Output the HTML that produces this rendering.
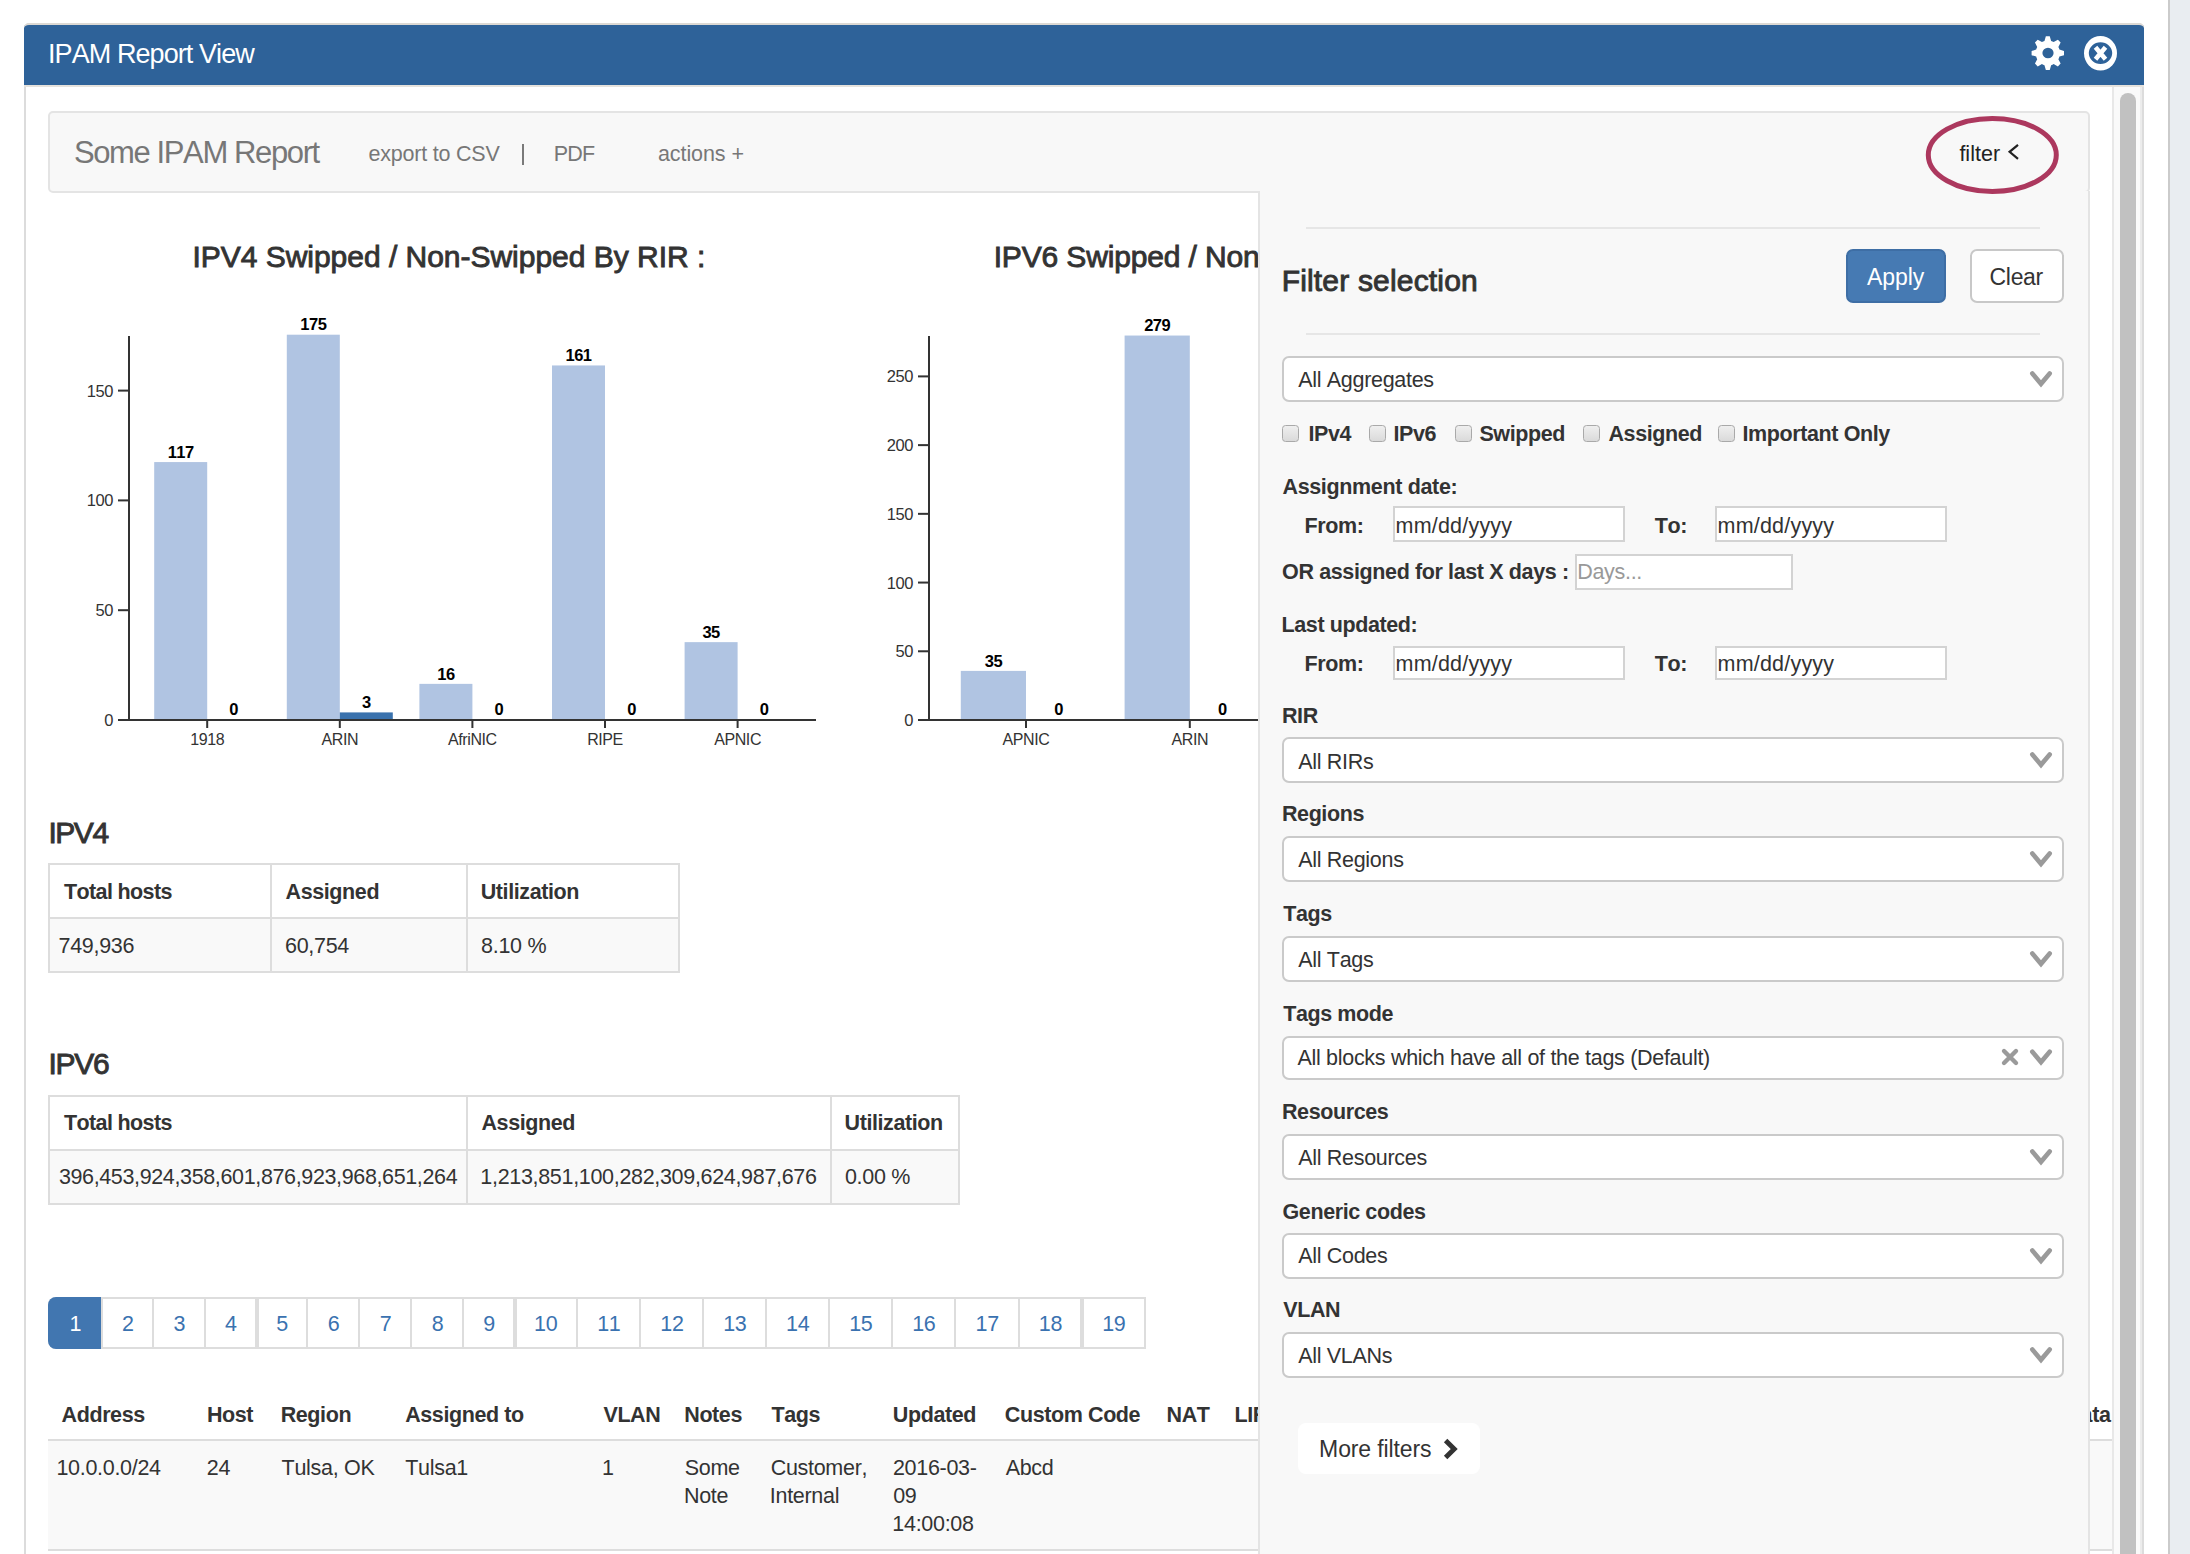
<!DOCTYPE html>
<html><head><meta charset="utf-8"><title>IPAM Report View</title>
<style>
html,body{margin:0;padding:0;width:2190px;height:1554px;overflow:hidden;background:#fff;position:relative}
body{font-family:"Liberation Sans",sans-serif;}
.t{position:absolute;white-space:nowrap;font-family:"Liberation Sans",sans-serif;font-kerning:none}
div{box-sizing:border-box}
svg text{font-family:"Liberation Sans",sans-serif;font-kerning:none}
</style></head><body>
<div style="position:absolute;left:2168px;top:0px;width:2px;height:1554px;background:#cbcbcb"></div>
<div style="position:absolute;left:2170px;top:0px;width:20px;height:1554px;background:#e9edf1"></div>
<div style="position:absolute;left:24px;top:23px;width:2120px;height:1577px;background:#fff;border:2px solid #dcdcdc;border-radius:5px 5px 0 0"></div>
<div style="position:absolute;left:24px;top:23px;width:2120px;height:64px;background:#2e6299;border-radius:5px 5px 0 0;border-top:2px solid #dcd9d4"></div>
<div style="position:absolute;left:24px;top:85px;width:2120px;height:2px;background:#e5e2dd"></div>
<div class="t" style="left:48.01px;top:39px;font-size:27px;line-height:30px;font-weight:normal;color:#fff;letter-spacing:-0.923px;">IPAM Report View</div>
<svg style="position:absolute;left:0;top:0" width="2190" height="100"><path fill="#fff" fill-rule="evenodd" d="M2044.46,40.99 L2045.85,36.22 L2049.75,36.22 L2051.14,40.99 L2052.43,41.46 L2053.66,42.08 L2057.88,39.73 L2060.64,42.60 L2058.38,47.00 L2058.98,48.28 L2059.42,49.62 L2064.00,51.06 L2064.00,55.14 L2059.42,56.58 L2058.98,57.92 L2058.38,59.20 L2060.64,63.60 L2057.88,66.47 L2053.66,64.12 L2052.43,64.74 L2051.14,65.21 L2049.75,69.98 L2045.85,69.98 L2044.46,65.21 L2043.17,64.74 L2041.94,64.12 L2037.72,66.47 L2034.96,63.60 L2037.22,59.20 L2036.62,57.92 L2036.18,56.58 L2031.60,55.14 L2031.60,51.06 L2036.18,49.62 L2036.62,48.28 L2037.22,47.00 L2034.96,42.60 L2037.72,39.73 L2041.94,42.08 L2043.17,41.46 Z M2053.6,53 A5.6,5.3 0 1 0 2042.4,53 A5.6,5.3 0 1 0 2053.6,53 Z"/><path fill="#fff" fill-rule="evenodd" d="M2117,53.2 A16.5,17.3 0 1 0 2084,53.2 A16.5,17.3 0 1 0 2117,53.2 Z M2112.2,53.1 A11.7,10.9 0 1 0 2088.8,53.1 A11.7,10.9 0 1 0 2112.2,53.1 Z"/><path d="M2095.5,47.3 L2105.5,59.3 M2105.5,47.3 L2095.5,59.3" stroke="#fff" stroke-width="4.6" stroke-linecap="butt"/></svg>
<div style="position:absolute;left:48px;top:111px;width:2042px;height:82px;background:#f8f8f8;border:2px solid #e4e4e4;border-radius:5px"></div>
<div class="t" style="left:73.89px;top:135px;font-size:31px;line-height:35px;font-weight:normal;color:#777;letter-spacing:-1.380px;">Some IPAM Report</div>
<div class="t" style="left:368.59px;top:142px;font-size:21.5px;line-height:24px;font-weight:normal;color:#777;letter-spacing:-0.219px;">export to CSV</div>
<div style="position:absolute;left:522px;top:144px;width:2px;height:21px;background:#7a7a7a"></div>
<div class="t" style="left:553.64px;top:142px;font-size:21.5px;line-height:24px;font-weight:normal;color:#777;letter-spacing:-0.788px;">PDF</div>
<div class="t" style="left:657.99px;top:142px;font-size:21.5px;line-height:24px;font-weight:normal;color:#777;letter-spacing:-0.085px;">actions +</div>
<div class="t" style="left:1959.40px;top:142px;font-size:21.5px;line-height:24px;font-weight:normal;color:#222;letter-spacing:0.009px;">filter</div>
<svg style="position:absolute;left:0;top:0" width="2190" height="210"><path d="M2018,144.8 L2009.6,151.8 L2018,158.8" fill="none" stroke="#222" stroke-width="2.2"/></svg>
<div class="t" style="left:192.38px;top:240px;font-size:30px;line-height:33px;font-weight:normal;color:#333;letter-spacing:-0.020px;-webkit-text-stroke:0.9px #333;">IPV4 Swipped / Non-Swipped By RIR :</div>
<div class="t" style="left:993.68px;top:240px;font-size:30px;line-height:33px;font-weight:normal;color:#333;letter-spacing:-0.150px;-webkit-text-stroke:0.9px #333;">IPV6 Swipped / Non-Swipped By RIR :</div>
<svg style="position:absolute;left:0;top:0" width="2190" height="780"><rect x="154.20" y="462.07" width="53" height="256.93" fill="#b0c4e2"/><text x="180.70" y="457.77" font-size="16.5" font-weight="bold" letter-spacing="-0.5" text-anchor="middle" fill="#000">117</text><text x="233.70" y="714.70" font-size="16.5" font-weight="bold" letter-spacing="-0.5" text-anchor="middle" fill="#000">0</text><rect x="286.80" y="334.70" width="53" height="384.30" fill="#b0c4e2"/><text x="313.30" y="330.40" font-size="16.5" font-weight="bold" letter-spacing="-0.5" text-anchor="middle" fill="#000">175</text><rect x="339.80" y="712.41" width="53" height="6.59" fill="#3a72ad"/><text x="366.30" y="708.11" font-size="16.5" font-weight="bold" letter-spacing="-0.5" text-anchor="middle" fill="#000">3</text><rect x="419.40" y="683.86" width="53" height="35.14" fill="#b0c4e2"/><text x="445.90" y="679.56" font-size="16.5" font-weight="bold" letter-spacing="-0.5" text-anchor="middle" fill="#000">16</text><text x="498.90" y="714.70" font-size="16.5" font-weight="bold" letter-spacing="-0.5" text-anchor="middle" fill="#000">0</text><rect x="552.00" y="365.44" width="53" height="353.56" fill="#b0c4e2"/><text x="578.50" y="361.14" font-size="16.5" font-weight="bold" letter-spacing="-0.5" text-anchor="middle" fill="#000">161</text><text x="631.50" y="714.70" font-size="16.5" font-weight="bold" letter-spacing="-0.5" text-anchor="middle" fill="#000">0</text><rect x="684.60" y="642.14" width="53" height="76.86" fill="#b0c4e2"/><text x="711.10" y="637.84" font-size="16.5" font-weight="bold" letter-spacing="-0.5" text-anchor="middle" fill="#000">35</text><text x="764.10" y="714.70" font-size="16.5" font-weight="bold" letter-spacing="-0.5" text-anchor="middle" fill="#000">0</text><rect x="128" y="336" width="2" height="385" fill="#333"/><rect x="118" y="719" width="698" height="2" fill="#333"/><rect x="118" y="719.00" width="11" height="2" fill="#333"/><text x="113" y="726.00" font-size="16.5" letter-spacing="-0.4" text-anchor="end" fill="#333">0</text><rect x="118" y="609.20" width="11" height="2" fill="#333"/><text x="113" y="616.20" font-size="16.5" letter-spacing="-0.4" text-anchor="end" fill="#333">50</text><rect x="118" y="499.40" width="11" height="2" fill="#333"/><text x="113" y="506.40" font-size="16.5" letter-spacing="-0.4" text-anchor="end" fill="#333">100</text><rect x="118" y="389.60" width="11" height="2" fill="#333"/><text x="113" y="396.60" font-size="16.5" letter-spacing="-0.4" text-anchor="end" fill="#333">150</text><rect x="206.20" y="719" width="2" height="9" fill="#333"/><text x="207.20" y="745" font-size="16" letter-spacing="-0.4" text-anchor="middle" fill="#333">1918</text><rect x="338.80" y="719" width="2" height="9" fill="#333"/><text x="339.80" y="745" font-size="16" letter-spacing="-0.4" text-anchor="middle" fill="#333">ARIN</text><rect x="471.40" y="719" width="2" height="9" fill="#333"/><text x="472.40" y="745" font-size="16" letter-spacing="-0.4" text-anchor="middle" fill="#333">AfriNIC</text><rect x="604.00" y="719" width="2" height="9" fill="#333"/><text x="605.00" y="745" font-size="16" letter-spacing="-0.4" text-anchor="middle" fill="#333">RIPE</text><rect x="736.60" y="719" width="2" height="9" fill="#333"/><text x="737.60" y="745" font-size="16" letter-spacing="-0.4" text-anchor="middle" fill="#333">APNIC</text><rect x="960.80" y="670.90" width="65.2" height="48.10" fill="#b0c4e2"/><text x="993.40" y="666.60" font-size="16.5" font-weight="bold" letter-spacing="-0.5" text-anchor="middle" fill="#000">35</text><text x="1058.60" y="714.70" font-size="16.5" font-weight="bold" letter-spacing="-0.5" text-anchor="middle" fill="#000">0</text><rect x="1124.60" y="335.54" width="65.2" height="383.46" fill="#b0c4e2"/><text x="1157.20" y="331.24" font-size="16.5" font-weight="bold" letter-spacing="-0.5" text-anchor="middle" fill="#000">279</text><text x="1222.40" y="714.70" font-size="16.5" font-weight="bold" letter-spacing="-0.5" text-anchor="middle" fill="#000">0</text><rect x="1288.40" y="719.00" width="65.2" height="0.00" fill="#b0c4e2"/><text x="1321.00" y="714.70" font-size="16.5" font-weight="bold" letter-spacing="-0.5" text-anchor="middle" fill="#000">0</text><text x="1386.20" y="714.70" font-size="16.5" font-weight="bold" letter-spacing="-0.5" text-anchor="middle" fill="#000">0</text><rect x="1452.20" y="719.00" width="65.2" height="0.00" fill="#b0c4e2"/><text x="1484.80" y="714.70" font-size="16.5" font-weight="bold" letter-spacing="-0.5" text-anchor="middle" fill="#000">0</text><text x="1550.00" y="714.70" font-size="16.5" font-weight="bold" letter-spacing="-0.5" text-anchor="middle" fill="#000">0</text><rect x="928" y="336" width="2" height="385" fill="#333"/><rect x="918" y="719" width="682" height="2" fill="#333"/><rect x="918" y="719.00" width="11" height="2" fill="#333"/><text x="913" y="726.00" font-size="16.5" letter-spacing="-0.4" text-anchor="end" fill="#333">0</text><rect x="918" y="650.28" width="11" height="2" fill="#333"/><text x="913" y="657.28" font-size="16.5" letter-spacing="-0.4" text-anchor="end" fill="#333">50</text><rect x="918" y="581.56" width="11" height="2" fill="#333"/><text x="913" y="588.56" font-size="16.5" letter-spacing="-0.4" text-anchor="end" fill="#333">100</text><rect x="918" y="512.84" width="11" height="2" fill="#333"/><text x="913" y="519.84" font-size="16.5" letter-spacing="-0.4" text-anchor="end" fill="#333">150</text><rect x="918" y="444.12" width="11" height="2" fill="#333"/><text x="913" y="451.12" font-size="16.5" letter-spacing="-0.4" text-anchor="end" fill="#333">200</text><rect x="918" y="375.40" width="11" height="2" fill="#333"/><text x="913" y="382.40" font-size="16.5" letter-spacing="-0.4" text-anchor="end" fill="#333">250</text><rect x="1025.00" y="719" width="2" height="9" fill="#333"/><text x="1026.00" y="745" font-size="16" letter-spacing="-0.4" text-anchor="middle" fill="#333">APNIC</text><rect x="1188.80" y="719" width="2" height="9" fill="#333"/><text x="1189.80" y="745" font-size="16" letter-spacing="-0.4" text-anchor="middle" fill="#333">ARIN</text><rect x="1352.60" y="719" width="2" height="9" fill="#333"/><text x="1353.60" y="745" font-size="16" letter-spacing="-0.4" text-anchor="middle" fill="#333">RIPE</text><rect x="1516.40" y="719" width="2" height="9" fill="#333"/><text x="1517.40" y="745" font-size="16" letter-spacing="-0.4" text-anchor="middle" fill="#333">AfriNIC</text></svg>
<div class="t" style="left:48.38px;top:816px;font-size:30px;line-height:33px;font-weight:normal;color:#333;letter-spacing:-1.431px;-webkit-text-stroke:0.9px #333;">IPV4</div>
<div style="position:absolute;left:48px;top:863px;width:632px;height:110px;border:2px solid #ddd;background:#fff"></div>
<div style="position:absolute;left:50px;top:919px;width:628px;height:52px;background:#f9f9f9"></div>
<div style="position:absolute;left:48px;top:917px;width:632px;height:2px;background:#ddd"></div>
<div style="position:absolute;left:270px;top:863px;width:2px;height:110px;background:#ddd"></div>
<div style="position:absolute;left:466px;top:863px;width:2px;height:110px;background:#ddd"></div>
<div class="t" style="left:64.06px;top:880px;font-size:21.5px;line-height:24px;font-weight:bold;color:#333;letter-spacing:-0.635px;">Total hosts</div>
<div class="t" style="left:285.56px;top:880px;font-size:21.5px;line-height:24px;font-weight:bold;color:#333;letter-spacing:-0.400px;">Assigned</div>
<div class="t" style="left:480.71px;top:880px;font-size:21.5px;line-height:24px;font-weight:bold;color:#333;letter-spacing:-0.400px;">Utilization</div>
<div class="t" style="left:58.60px;top:934px;font-size:21.5px;line-height:24px;font-weight:normal;color:#333;letter-spacing:-0.328px;">749,936</div>
<div class="t" style="left:285.01px;top:934px;font-size:21.5px;line-height:24px;font-weight:normal;color:#333;letter-spacing:-0.301px;">60,754</div>
<div class="t" style="left:481.07px;top:934px;font-size:21.5px;line-height:24px;font-weight:normal;color:#333;letter-spacing:-0.301px;">8.10 %</div>
<div class="t" style="left:48.38px;top:1047px;font-size:30px;line-height:33px;font-weight:normal;color:#333;letter-spacing:-1.284px;-webkit-text-stroke:0.9px #333;">IPV6</div>
<div style="position:absolute;left:48px;top:1095px;width:912px;height:110px;border:2px solid #ddd;background:#fff"></div>
<div style="position:absolute;left:50px;top:1151px;width:908px;height:52px;background:#f9f9f9"></div>
<div style="position:absolute;left:48px;top:1149px;width:912px;height:2px;background:#ddd"></div>
<div style="position:absolute;left:466px;top:1095px;width:2px;height:110px;background:#ddd"></div>
<div style="position:absolute;left:830px;top:1095px;width:2px;height:110px;background:#ddd"></div>
<div class="t" style="left:64.06px;top:1111px;font-size:21.5px;line-height:24px;font-weight:bold;color:#333;letter-spacing:-0.635px;">Total hosts</div>
<div class="t" style="left:481.46px;top:1111px;font-size:21.5px;line-height:24px;font-weight:bold;color:#333;letter-spacing:-0.400px;">Assigned</div>
<div class="t" style="left:844.51px;top:1111px;font-size:21.5px;line-height:24px;font-weight:bold;color:#333;letter-spacing:-0.400px;">Utilization</div>
<div class="t" style="left:58.88px;top:1165px;font-size:21.5px;line-height:24px;font-weight:normal;color:#333;letter-spacing:-0.361px;">396,453,924,358,601,876,923,968,651,264</div>
<div class="t" style="left:480.36px;top:1165px;font-size:21.5px;line-height:24px;font-weight:normal;color:#333;letter-spacing:-0.317px;">1,213,851,100,282,309,624,987,676</div>
<div class="t" style="left:844.96px;top:1165px;font-size:21.5px;line-height:24px;font-weight:normal;color:#333;letter-spacing:-0.301px;">0.00 %</div>
<div style="position:absolute;left:48px;top:1297px;width:1098px;height:52px;border:2px solid #ddd;border-radius:8px 0 0 8px;background:#fff"></div>
<div style="position:absolute;left:48px;top:1297px;width:54px;height:52px;background:#4176b0;border-radius:8px 0 0 8px"></div>
<div style="position:absolute;left:101px;top:1297px;width:2px;height:52px;background:#ddd"></div>
<div style="position:absolute;left:152px;top:1297px;width:2px;height:52px;background:#ddd"></div>
<div style="position:absolute;left:204px;top:1297px;width:2px;height:52px;background:#ddd"></div>
<div style="position:absolute;left:255px;top:1297px;width:4px;height:52px;background:#ddd"></div>
<div style="position:absolute;left:306px;top:1297px;width:2px;height:52px;background:#ddd"></div>
<div style="position:absolute;left:358px;top:1297px;width:2px;height:52px;background:#ddd"></div>
<div style="position:absolute;left:410px;top:1297px;width:2px;height:52px;background:#ddd"></div>
<div style="position:absolute;left:462px;top:1297px;width:2px;height:52px;background:#ddd"></div>
<div style="position:absolute;left:513px;top:1297px;width:4px;height:52px;background:#ddd"></div>
<div style="position:absolute;left:576px;top:1297px;width:2px;height:52px;background:#ddd"></div>
<div style="position:absolute;left:639px;top:1297px;width:2px;height:52px;background:#ddd"></div>
<div style="position:absolute;left:702px;top:1297px;width:2px;height:52px;background:#ddd"></div>
<div style="position:absolute;left:765px;top:1297px;width:2px;height:52px;background:#ddd"></div>
<div style="position:absolute;left:828px;top:1297px;width:2px;height:52px;background:#ddd"></div>
<div style="position:absolute;left:891px;top:1297px;width:2px;height:52px;background:#ddd"></div>
<div style="position:absolute;left:954px;top:1297px;width:2px;height:52px;background:#ddd"></div>
<div style="position:absolute;left:1018px;top:1297px;width:2px;height:52px;background:#ddd"></div>
<div style="position:absolute;left:1080px;top:1297px;width:4px;height:52px;background:#ddd"></div>
<div class="t" style="left:69.53px;top:1312px;font-size:21.5px;line-height:24px;font-weight:normal;color:#fff;letter-spacing:-0.301px;">1</div>
<div class="t" style="left:122.07px;top:1312px;font-size:21.5px;line-height:24px;font-weight:normal;color:#3a72b0;letter-spacing:-0.301px;">2</div>
<div class="t" style="left:173.53px;top:1312px;font-size:21.5px;line-height:24px;font-weight:normal;color:#3a72b0;letter-spacing:-0.301px;">3</div>
<div class="t" style="left:225.09px;top:1312px;font-size:21.5px;line-height:24px;font-weight:normal;color:#3a72b0;letter-spacing:-0.301px;">4</div>
<div class="t" style="left:276.24px;top:1312px;font-size:21.5px;line-height:24px;font-weight:normal;color:#3a72b0;letter-spacing:-0.301px;">5</div>
<div class="t" style="left:327.85px;top:1312px;font-size:21.5px;line-height:24px;font-weight:normal;color:#3a72b0;letter-spacing:-0.301px;">6</div>
<div class="t" style="left:379.66px;top:1312px;font-size:21.5px;line-height:24px;font-weight:normal;color:#3a72b0;letter-spacing:-0.301px;">7</div>
<div class="t" style="left:431.67px;top:1312px;font-size:21.5px;line-height:24px;font-weight:normal;color:#3a72b0;letter-spacing:-0.301px;">8</div>
<div class="t" style="left:483.33px;top:1312px;font-size:21.5px;line-height:24px;font-weight:normal;color:#3a72b0;letter-spacing:-0.301px;">9</div>
<div class="t" style="left:534.09px;top:1312px;font-size:21.5px;line-height:24px;font-weight:normal;color:#3a72b0;letter-spacing:-0.301px;">10</div>
<div class="t" style="left:597.20px;top:1312px;font-size:21.5px;line-height:24px;font-weight:normal;color:#3a72b0;letter-spacing:-0.301px;">11</div>
<div class="t" style="left:660.22px;top:1312px;font-size:21.5px;line-height:24px;font-weight:normal;color:#3a72b0;letter-spacing:-0.301px;">12</div>
<div class="t" style="left:723.15px;top:1312px;font-size:21.5px;line-height:24px;font-weight:normal;color:#3a72b0;letter-spacing:-0.301px;">13</div>
<div class="t" style="left:785.99px;top:1312px;font-size:21.5px;line-height:24px;font-weight:normal;color:#3a72b0;letter-spacing:-0.301px;">14</div>
<div class="t" style="left:849.13px;top:1312px;font-size:21.5px;line-height:24px;font-weight:normal;color:#3a72b0;letter-spacing:-0.301px;">15</div>
<div class="t" style="left:912.15px;top:1312px;font-size:21.5px;line-height:24px;font-weight:normal;color:#3a72b0;letter-spacing:-0.301px;">16</div>
<div class="t" style="left:975.62px;top:1312px;font-size:21.5px;line-height:24px;font-weight:normal;color:#3a72b0;letter-spacing:-0.301px;">17</div>
<div class="t" style="left:1038.79px;top:1312px;font-size:21.5px;line-height:24px;font-weight:normal;color:#3a72b0;letter-spacing:-0.301px;">18</div>
<div class="t" style="left:1102.18px;top:1312px;font-size:21.5px;line-height:24px;font-weight:normal;color:#3a72b0;letter-spacing:-0.301px;">19</div>
<div class="t" style="left:61.56px;top:1403px;font-size:21.5px;line-height:24px;font-weight:bold;color:#333;letter-spacing:-0.400px;">Address</div>
<div class="t" style="left:206.96px;top:1403px;font-size:21.5px;line-height:24px;font-weight:bold;color:#333;letter-spacing:-0.400px;">Host</div>
<div class="t" style="left:280.66px;top:1403px;font-size:21.5px;line-height:24px;font-weight:bold;color:#333;letter-spacing:-0.400px;">Region</div>
<div class="t" style="left:405.16px;top:1403px;font-size:21.5px;line-height:24px;font-weight:bold;color:#333;letter-spacing:-0.400px;">Assigned to</div>
<div class="t" style="left:603.45px;top:1403px;font-size:21.5px;line-height:24px;font-weight:bold;color:#333;letter-spacing:-0.400px;">VLAN</div>
<div class="t" style="left:684.26px;top:1403px;font-size:21.5px;line-height:24px;font-weight:bold;color:#333;letter-spacing:-0.400px;">Notes</div>
<div class="t" style="left:771.56px;top:1403px;font-size:21.5px;line-height:24px;font-weight:bold;color:#333;letter-spacing:-0.400px;">Tags</div>
<div class="t" style="left:892.81px;top:1403px;font-size:21.5px;line-height:24px;font-weight:bold;color:#333;letter-spacing:-0.400px;">Updated</div>
<div class="t" style="left:1004.82px;top:1403px;font-size:21.5px;line-height:24px;font-weight:bold;color:#333;letter-spacing:-0.400px;">Custom Code</div>
<div class="t" style="left:1166.56px;top:1403px;font-size:21.5px;line-height:24px;font-weight:bold;color:#333;letter-spacing:-0.400px;">NAT</div>
<div class="t" style="left:1234.56px;top:1403px;font-size:21.5px;line-height:24px;font-weight:bold;color:#333;letter-spacing:-0.400px;">LIR</div>
<div style="position:absolute;left:48px;top:1439px;width:2064px;height:2px;background:#ddd"></div>
<div style="position:absolute;left:48px;top:1441px;width:2064px;height:108px;background:#f9f9f9"></div>
<div style="position:absolute;left:48px;top:1549px;width:2064px;height:2px;background:#ddd"></div>
<div class="t" style="left:56.46px;top:1456px;font-size:21.5px;line-height:24px;font-weight:normal;color:#333;letter-spacing:-0.301px;">10.0.0.0/24</div>
<div class="t" style="left:206.72px;top:1456px;font-size:21.5px;line-height:24px;font-weight:normal;color:#333;letter-spacing:-0.301px;">24</div>
<div class="t" style="left:281.62px;top:1456px;font-size:21.5px;line-height:24px;font-weight:normal;color:#333;letter-spacing:-0.301px;">Tulsa, OK</div>
<div class="t" style="left:405.22px;top:1456px;font-size:21.5px;line-height:24px;font-weight:normal;color:#333;letter-spacing:-0.301px;">Tulsa1</div>
<div class="t" style="left:601.96px;top:1456px;font-size:21.5px;line-height:24px;font-weight:normal;color:#333;letter-spacing:-0.301px;">1</div>
<div class="t" style="left:684.72px;top:1456px;font-size:21.5px;line-height:24px;font-weight:normal;color:#333;letter-spacing:-0.301px;">Some</div>
<div class="t" style="left:683.94px;top:1484px;font-size:21.5px;line-height:24px;font-weight:normal;color:#333;letter-spacing:-0.301px;">Note</div>
<div class="t" style="left:770.71px;top:1456px;font-size:21.5px;line-height:24px;font-weight:normal;color:#333;letter-spacing:-0.301px;">Customer,</div>
<div class="t" style="left:769.82px;top:1484px;font-size:21.5px;line-height:24px;font-weight:normal;color:#333;letter-spacing:-0.301px;">Internal</div>
<div class="t" style="left:892.92px;top:1456px;font-size:21.5px;line-height:24px;font-weight:normal;color:#333;letter-spacing:-0.301px;">2016-03-</div>
<div class="t" style="left:893.16px;top:1484px;font-size:21.5px;line-height:24px;font-weight:normal;color:#333;letter-spacing:-0.301px;">09</div>
<div class="t" style="left:892.36px;top:1512px;font-size:21.5px;line-height:24px;font-weight:normal;color:#333;letter-spacing:-0.301px;">14:00:08</div>
<div class="t" style="left:1005.66px;top:1456px;font-size:21.5px;line-height:24px;font-weight:normal;color:#333;letter-spacing:-0.301px;">Abcd</div>
<div class="t" style="left:2020.47px;top:1403px;font-size:21.5px;line-height:24px;font-weight:bold;color:#333;letter-spacing:-0.400px;">Metadata</div>
<div style="position:absolute;left:1258px;top:191px;width:832px;height:1369px;background:#f8f8f8;border-left:2px solid #e4e4e4;border-right:2px solid #e4e4e4"></div>
<div style="position:absolute;left:1306px;top:227px;width:734px;height:2px;background:#e6e6e6"></div>
<div style="position:absolute;left:1306px;top:333px;width:734px;height:2px;background:#e6e6e6"></div>
<div class="t" style="left:1281.69px;top:264px;font-size:30px;line-height:33px;font-weight:normal;color:#333;letter-spacing:0.174px;-webkit-text-stroke:0.9px #333;">Filter selection</div>
<div style="position:absolute;left:1846px;top:249px;width:100px;height:54px;background:#467ab3;border:2px solid #3e6ea5;border-radius:7px"></div>
<div class="t" style="left:1867.06px;top:264px;font-size:23px;line-height:26px;font-weight:normal;color:#fff;letter-spacing:-0.086px;">Apply</div>
<div style="position:absolute;left:1970px;top:249px;width:94px;height:54px;background:#fff;border:2px solid #c8c8c8;border-radius:7px"></div>
<div class="t" style="left:1989.53px;top:264px;font-size:23px;line-height:26px;font-weight:normal;color:#333;letter-spacing:-0.303px;">Clear</div>
<div style="position:absolute;left:1282px;top:356px;width:782px;height:46px;background:#fff;border:2px solid #cacaca;border-radius:7px"></div>
<div class="t" style="left:1298.16px;top:368px;font-size:21.5px;line-height:24px;font-weight:normal;color:#333;letter-spacing:-0.301px;">All Aggregates</div>
<div style="position:absolute;left:1282.3px;top:425px;width:17px;height:17px;border:1.5px solid #a9a9a9;border-radius:3.5px;background:linear-gradient(#efefef,#dadada)"></div>
<div class="t" style="left:1308.46px;top:422px;font-size:21.5px;line-height:24px;font-weight:bold;color:#333;letter-spacing:-0.400px;">IPv4</div>
<div style="position:absolute;left:1368.6px;top:425px;width:17px;height:17px;border:1.5px solid #a9a9a9;border-radius:3.5px;background:linear-gradient(#efefef,#dadada)"></div>
<div class="t" style="left:1393.46px;top:422px;font-size:21.5px;line-height:24px;font-weight:bold;color:#333;letter-spacing:-0.400px;">IPv6</div>
<div style="position:absolute;left:1454.6px;top:425px;width:17px;height:17px;border:1.5px solid #a9a9a9;border-radius:3.5px;background:linear-gradient(#efefef,#dadada)"></div>
<div class="t" style="left:1479.38px;top:422px;font-size:21.5px;line-height:24px;font-weight:bold;color:#333;letter-spacing:-0.400px;">Swipped</div>
<div style="position:absolute;left:1582.6px;top:425px;width:17px;height:17px;border:1.5px solid #a9a9a9;border-radius:3.5px;background:linear-gradient(#efefef,#dadada)"></div>
<div class="t" style="left:1608.46px;top:422px;font-size:21.5px;line-height:24px;font-weight:bold;color:#333;letter-spacing:-0.400px;">Assigned</div>
<div style="position:absolute;left:1718.4px;top:425px;width:17px;height:17px;border:1.5px solid #a9a9a9;border-radius:3.5px;background:linear-gradient(#efefef,#dadada)"></div>
<div class="t" style="left:1742.56px;top:422px;font-size:21.5px;line-height:24px;font-weight:bold;color:#333;letter-spacing:-0.400px;">Important Only</div>
<div class="t" style="left:1282.46px;top:475px;font-size:21.5px;line-height:24px;font-weight:bold;color:#333;letter-spacing:-0.346px;">Assignment date:</div>
<div class="t" style="left:1304.56px;top:514px;font-size:21.5px;line-height:24px;font-weight:bold;color:#333;letter-spacing:-0.400px;">From:</div>
<div style="position:absolute;left:1393px;top:506px;width:232px;height:36px;background:#fff;border:2px solid #d3d3d3"></div>
<div class="t" style="left:1395.57px;top:514px;font-size:21.5px;line-height:24px;font-weight:normal;color:#333;letter-spacing:0.199px;">mm/dd/yyyy</div>
<div class="t" style="left:1654.76px;top:514px;font-size:21.5px;line-height:24px;font-weight:bold;color:#333;letter-spacing:-0.400px;">To:</div>
<div style="position:absolute;left:1715px;top:506px;width:232px;height:36px;background:#fff;border:2px solid #d3d3d3"></div>
<div class="t" style="left:1717.57px;top:514px;font-size:21.5px;line-height:24px;font-weight:normal;color:#333;letter-spacing:0.199px;">mm/dd/yyyy</div>
<div class="t" style="left:1282.12px;top:560px;font-size:21.5px;line-height:24px;font-weight:bold;color:#333;letter-spacing:-0.377px;">OR assigned for last X days :</div>
<div style="position:absolute;left:1575px;top:554px;width:218px;height:36px;background:#fff;border:2px solid #d3d3d3"></div>
<div class="t" style="left:1577.24px;top:560px;font-size:21.5px;line-height:24px;font-weight:normal;color:#999;letter-spacing:-0.301px;">Days...</div>
<div class="t" style="left:1281.56px;top:613px;font-size:21.5px;line-height:24px;font-weight:bold;color:#333;letter-spacing:-0.400px;">Last updated:</div>
<div class="t" style="left:1304.56px;top:652px;font-size:21.5px;line-height:24px;font-weight:bold;color:#333;letter-spacing:-0.400px;">From:</div>
<div style="position:absolute;left:1393px;top:646px;width:232px;height:34px;background:#fff;border:2px solid #d3d3d3"></div>
<div class="t" style="left:1395.57px;top:652px;font-size:21.5px;line-height:24px;font-weight:normal;color:#333;letter-spacing:0.199px;">mm/dd/yyyy</div>
<div class="t" style="left:1654.76px;top:652px;font-size:21.5px;line-height:24px;font-weight:bold;color:#333;letter-spacing:-0.400px;">To:</div>
<div style="position:absolute;left:1715px;top:646px;width:232px;height:34px;background:#fff;border:2px solid #d3d3d3"></div>
<div class="t" style="left:1717.57px;top:652px;font-size:21.5px;line-height:24px;font-weight:normal;color:#333;letter-spacing:0.199px;">mm/dd/yyyy</div>
<div class="t" style="left:1281.96px;top:704px;font-size:21.5px;line-height:24px;font-weight:bold;color:#333;letter-spacing:-0.400px;">RIR</div>
<div style="position:absolute;left:1282px;top:737px;width:782px;height:46px;background:#fff;border:2px solid #cacaca;border-radius:7px"></div>
<div class="t" style="left:1298.16px;top:750px;font-size:21.5px;line-height:24px;font-weight:normal;color:#333;letter-spacing:-0.301px;">All RIRs</div>
<div class="t" style="left:1281.96px;top:802px;font-size:21.5px;line-height:24px;font-weight:bold;color:#333;letter-spacing:-0.400px;">Regions</div>
<div style="position:absolute;left:1282px;top:836px;width:782px;height:46px;background:#fff;border:2px solid #cacaca;border-radius:7px"></div>
<div class="t" style="left:1298.16px;top:848px;font-size:21.5px;line-height:24px;font-weight:normal;color:#333;letter-spacing:-0.301px;">All Regions</div>
<div class="t" style="left:1283.16px;top:902px;font-size:21.5px;line-height:24px;font-weight:bold;color:#333;letter-spacing:-0.400px;">Tags</div>
<div style="position:absolute;left:1282px;top:936px;width:782px;height:46px;background:#fff;border:2px solid #cacaca;border-radius:7px"></div>
<div class="t" style="left:1298.16px;top:948px;font-size:21.5px;line-height:24px;font-weight:normal;color:#333;letter-spacing:-0.301px;">All Tags</div>
<div class="t" style="left:1283.16px;top:1002px;font-size:21.5px;line-height:24px;font-weight:bold;color:#333;letter-spacing:-0.400px;">Tags mode</div>
<div style="position:absolute;left:1282px;top:1036px;width:782px;height:44px;background:#fff;border:2px solid #cacaca;border-radius:7px"></div>
<div class="t" style="left:1297.46px;top:1046px;font-size:21.5px;line-height:24px;font-weight:normal;color:#333;letter-spacing:-0.301px;">All blocks which have all of the tags (Default)</div>
<div class="t" style="left:1281.96px;top:1100px;font-size:21.5px;line-height:24px;font-weight:bold;color:#333;letter-spacing:-0.400px;">Resources</div>
<div style="position:absolute;left:1282px;top:1134px;width:782px;height:46px;background:#fff;border:2px solid #cacaca;border-radius:7px"></div>
<div class="t" style="left:1298.16px;top:1146px;font-size:21.5px;line-height:24px;font-weight:normal;color:#333;letter-spacing:-0.301px;">All Resources</div>
<div class="t" style="left:1282.52px;top:1200px;font-size:21.5px;line-height:24px;font-weight:bold;color:#333;letter-spacing:-0.400px;">Generic codes</div>
<div style="position:absolute;left:1282px;top:1233px;width:782px;height:46px;background:#fff;border:2px solid #cacaca;border-radius:7px"></div>
<div class="t" style="left:1298.16px;top:1244px;font-size:21.5px;line-height:24px;font-weight:normal;color:#333;letter-spacing:-0.301px;">All Codes</div>
<div class="t" style="left:1283.25px;top:1298px;font-size:21.5px;line-height:24px;font-weight:bold;color:#333;letter-spacing:-0.400px;">VLAN</div>
<div style="position:absolute;left:1282px;top:1332px;width:782px;height:46px;background:#fff;border:2px solid #cacaca;border-radius:7px"></div>
<div class="t" style="left:1298.16px;top:1344px;font-size:21.5px;line-height:24px;font-weight:normal;color:#333;letter-spacing:-0.301px;">All VLANs</div>
<svg style="position:absolute;left:0;top:0" width="2190" height="1554"><path d="M2032.3,373.4 L2041,383.8 L2049.7,373.4" fill="none" stroke="#9a9a9a" stroke-width="4.6" stroke-linecap="round" stroke-linejoin="miter"/><path d="M2032.3,754.4 L2041,764.8 L2049.7,754.4" fill="none" stroke="#9a9a9a" stroke-width="4.6" stroke-linecap="round" stroke-linejoin="miter"/><path d="M2032.3,853.4 L2041,863.8 L2049.7,853.4" fill="none" stroke="#9a9a9a" stroke-width="4.6" stroke-linecap="round" stroke-linejoin="miter"/><path d="M2032.3,953.4 L2041,963.8 L2049.7,953.4" fill="none" stroke="#9a9a9a" stroke-width="4.6" stroke-linecap="round" stroke-linejoin="miter"/><path d="M2032.3,1051.7 L2041,1062.1 L2049.7,1051.7" fill="none" stroke="#9a9a9a" stroke-width="4.6" stroke-linecap="round" stroke-linejoin="miter"/><path d="M2004,1051.0 L2016,1063.0 M2016,1051.0 L2004,1063.0" fill="none" stroke="#9a9a9a" stroke-width="4.4" stroke-linecap="round"/><path d="M2032.3,1151.4 L2041,1161.8 L2049.7,1151.4" fill="none" stroke="#9a9a9a" stroke-width="4.6" stroke-linecap="round" stroke-linejoin="miter"/><path d="M2032.3,1250.4 L2041,1260.8 L2049.7,1250.4" fill="none" stroke="#9a9a9a" stroke-width="4.6" stroke-linecap="round" stroke-linejoin="miter"/><path d="M2032.3,1349.4 L2041,1359.8 L2049.7,1349.4" fill="none" stroke="#9a9a9a" stroke-width="4.6" stroke-linecap="round" stroke-linejoin="miter"/></svg>
<div style="position:absolute;left:1298px;top:1423px;width:182px;height:51px;background:#fff;border-radius:8px"></div>
<div class="t" style="left:1319.11px;top:1436px;font-size:23px;line-height:26px;font-weight:normal;color:#333;letter-spacing:-0.120px;">More filters</div>
<svg style="position:absolute;left:0;top:0" width="2190" height="1554"><path d="M1445.6,1440.6 L1454.2,1449 L1445.6,1457.4" fill="none" stroke="#333" stroke-width="4.9"/></svg>
<div style="position:absolute;left:2112px;top:87px;width:30px;height:1467px;background:#fafafa;border-left:2px solid #e8e8e8;border-right:2px solid #ececec"></div>
<div style="position:absolute;left:2120px;top:93px;width:16px;height:1507px;background:#c1c1c1;border-radius:8px"></div>
<svg style="position:absolute;left:0;top:0" width="2190" height="260"><ellipse cx="1992.3" cy="154.9" rx="64" ry="36.5" fill="none" stroke="#ac385e" stroke-width="5"/></svg>
</body></html>
